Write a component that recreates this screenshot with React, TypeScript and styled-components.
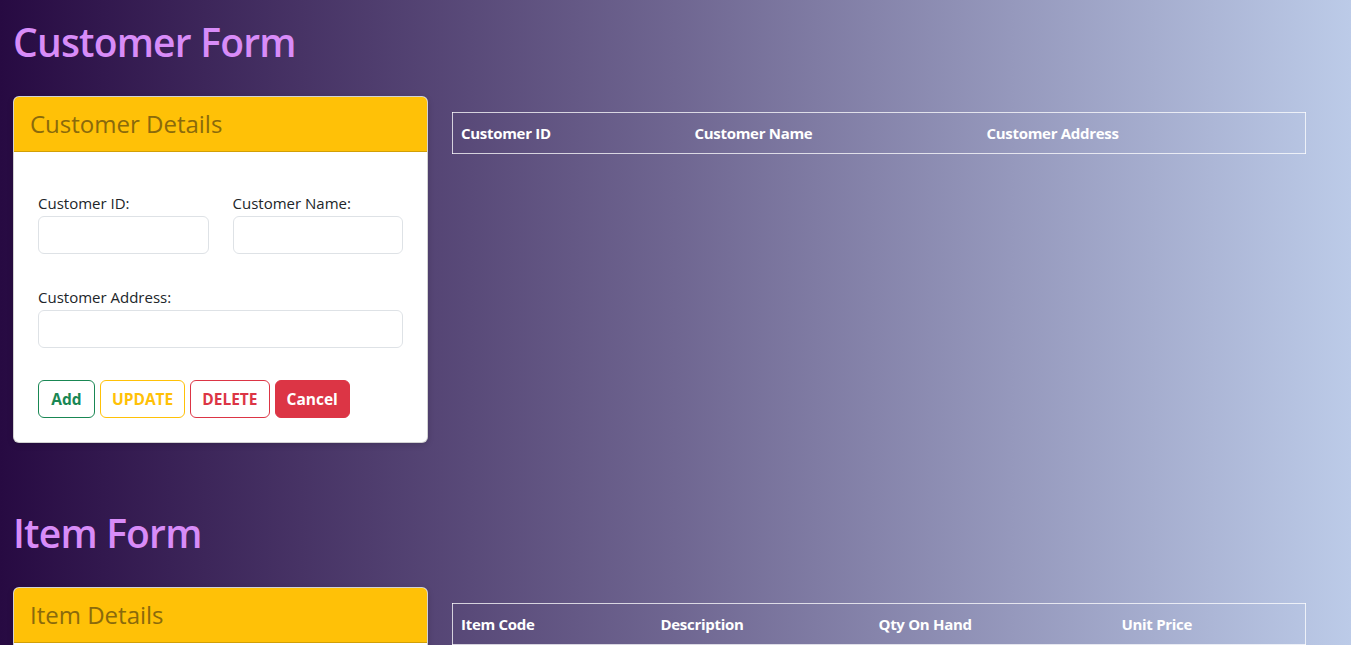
import React from 'react';
import styled, { createGlobalStyle } from 'styled-components';

const GlobalStyle = createGlobalStyle`
	body {
		margin: 0;
		font-family: 'Open Sans', 'Noto Sans', sans-serif;
		color: #212529;
	}
	* {
		box-sizing: border-box;
	}
`;

const Viewport = styled.div`
	height: 100vh;
	overflow-y: scroll;
	background: linear-gradient(to right, #270a42 0%, #6f6691 50%, #bccbe8 100%);

	&::-webkit-scrollbar {
		width: 16px;
		background: #f1f1f1;
	}
	&::-webkit-scrollbar-thumb {
		background: #c1c1c1;
		border-left: 2px solid #f1f1f1;
		border-right: 1px solid #f1f1f1;
	}
`;

const Page = styled.main`
	padding: 0 46px 60px 13px;
`;

const Section = styled.section`
	padding-top: 18px;
	& + & {
		margin-top: 48px;
	}
`;

const Title = styled.h1`
	margin: 0 0 30px;
	font-size: 39px;
	line-height: 48px;
	font-weight: 600;
	letter-spacing: -0.8px;
	color: #d88cf8;
`;

const Row = styled.div`
	display: flex;
	align-items: flex-start;
	gap: 24px;
`;

const Card = styled.div`
	width: 415px;
	flex: none;
	background: #fff;
	border: 1px solid rgba(0, 0, 0, 0.175);
	border-radius: 6px;
	overflow: hidden;
	box-shadow: 0 2px 6px rgba(0, 0, 0, 0.15);
`;

const CardHeader = styled.div`
	background: #ffc107;
	border-bottom: 1px solid rgba(0, 0, 0, 0.175);
	padding: 12px 16px;
	font-size: 24px;
	line-height: 30px;
	color: #8a6a0c;
`;

const CardBody = styled.div`
	padding: 40px 24px 24px;
`;

const FieldGrid = styled.div`
	display: grid;
	grid-template-columns: minmax(0, 1fr) minmax(0, 1fr);
	column-gap: 24px;
	row-gap: 32px;
	margin-bottom: 32px;
`;

const Field = styled.div<{ $wide?: boolean }>`
	grid-column: ${(p) => (p.$wide ? '1 / -1' : 'auto')};
	display: flex;
	flex-direction: column;
	min-width: 0;
`;

const Label = styled.label`
	font-size: 15px;
	line-height: 22px;
	margin-bottom: 2px;
`;

const Input = styled.input`
	width: 100%;
	height: 38px;
	border: 1px solid #dee2e6;
	border-radius: 6px;
	padding: 6px 12px;
	font: inherit;
	font-size: 15px;
	outline: none;
`;

const Buttons = styled.div`
	display: flex;
	gap: 5px;
`;

const tones = {
	success: '#198754',
	warning: '#ffc107',
	danger: '#dc3545',
};

const Button = styled.button<{ $tone: keyof typeof tones; $solid?: boolean }>`
	height: 38px;
	min-width: 57px;
	padding: 0 11px;
	border-radius: 6px;
	border: 1px solid ${(p) => tones[p.$tone]};
	background: ${(p) => (p.$solid ? tones[p.$tone] : '#fff')};
	color: ${(p) => (p.$solid ? '#fff' : tones[p.$tone])};
	font-family: inherit;
	font-size: 15.5px;
	font-weight: 700;
	cursor: pointer;
`;

const TableWrap = styled.div`
	flex: 1;
	min-width: 0;
	margin-top: 16px;
`;

const Table = styled.table`
	width: 100%;
	table-layout: fixed;
	border-collapse: collapse;
	border: 1px solid rgba(255, 255, 255, 0.75);
`;

const Th = styled.th<{ $w: number }>`
	width: ${(p) => p.$w}px;
	text-align: left;
	padding: 8px;
	font-size: 15px;
	line-height: 24px;
	font-weight: 700;
	color: #fff;
	letter-spacing: -0.3px;
	white-space: nowrap;
`;

const customerCols = [
	{ name: 'Customer ID', w: 234 },
	{ name: 'Customer Name', w: 292 },
	{ name: 'Customer Address', w: 327 },
];

const itemCols = [
	{ name: 'Item Code', w: 200 },
	{ name: 'Description', w: 218 },
	{ name: 'Qty On Hand', w: 243 },
	{ name: 'Unit Price', w: 192 },
];

interface FormSectionProps {
	title: string;
	heading: string;
	fields: { label: string; wide?: boolean }[];
	cols: { name: string; w: number }[];
}

function FormSection({ title, heading, fields, cols }: FormSectionProps) {
	return (
		<Section>
			<Title>{title}</Title>
			<Row>
				<Card>
					<CardHeader>{heading}</CardHeader>
					<CardBody>
						<FieldGrid>
							{fields.map((f) => (
								<Field key={f.label} $wide={f.wide}>
									<Label>{f.label}</Label>
									<Input type="text" />
								</Field>
							))}
						</FieldGrid>
						<Buttons>
							<Button $tone="success">Add</Button>
							<Button $tone="warning">UPDATE</Button>
							<Button $tone="danger">DELETE</Button>
							<Button $tone="danger" $solid>
								Cancel
							</Button>
						</Buttons>
					</CardBody>
				</Card>
				<TableWrap>
					<Table>
						<thead>
							<tr>
								{cols.map((c) => (
									<Th key={c.name} $w={c.w}>
										{c.name}
									</Th>
								))}
							</tr>
						</thead>
						<tbody></tbody>
					</Table>
				</TableWrap>
			</Row>
		</Section>
	);
}

export default function App() {
	return (
		<>
			<GlobalStyle />
			<Viewport>
				<Page>
					<FormSection
						title="Customer Form"
						heading="Customer Details"
						fields={[
							{ label: 'Customer ID:' },
							{ label: 'Customer Name:' },
							{ label: 'Customer Address:', wide: true },
						]}
						cols={customerCols}
					/>
					<FormSection
						title="Item Form"
						heading="Item Details"
						fields={[
							{ label: 'Item Code:' },
							{ label: 'Description:' },
							{ label: 'Qty On Hand:' },
							{ label: 'Unit Price:' },
						]}
						cols={itemCols}
					/>
				</Page>
			</Viewport>
		</>
	);
}
